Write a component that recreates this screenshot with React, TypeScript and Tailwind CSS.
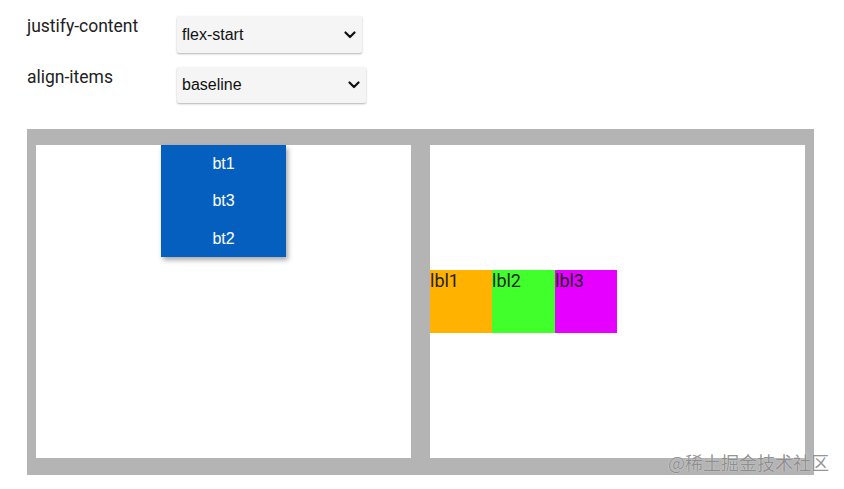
import React from 'react';

const Chevron = () => (
  <svg width="12" height="8" viewBox="0 0 12 8" className="pointer-events-none absolute right-[6px] top-1/2 -translate-y-1/2">
    <path d="M1.5 1.5 L6 6 L10.5 1.5" fill="none" stroke="#111" strokeWidth="2.2" strokeLinecap="round" strokeLinejoin="round" />
  </svg>
);

const Field: React.FC<{ label: string; value: string; options: string[]; width: string }> = ({ label, value, options, width }) => (
  <div className="flex items-start">
    <div className="w-[150px] text-[17.5px] leading-[21px] text-[#222] font-['Roboto',sans-serif]">{label}</div>
    <div className={`relative ${width}`}>
      <select
        defaultValue={value}
        className="h-full w-full appearance-none rounded-[2px] bg-[#f5f5f5] pl-[5px] text-[16px] text-[#111] shadow-[0_1px_2px_rgba(0,0,0,0.3)] outline-none font-['Liberation_Sans',Arial,sans-serif]"
      >
        {options.map((o) => (
          <option key={o}>{o}</option>
        ))}
      </select>
      <Chevron />
    </div>
  </div>
);

const buttons = ['bt1', 'bt3', 'bt2'];
const labels = [
  { text: 'lbl1', cls: 'w-[62px] bg-[#ffb200]' },
  { text: 'lbl2', cls: 'w-[63px] bg-[#40ff2a]' },
  { text: 'lbl3', cls: 'w-[62px] bg-[#e600ff]' },
];

export default function App() {
  return (
    <div className="relative h-[489px] w-[844px] overflow-hidden bg-white">
      <div className="flex flex-col gap-[14px] pl-[27px] pt-[16px]">
        <Field label="justify-content" value="flex-start" width="w-[185px] h-[37px]" options={['flex-start', 'flex-end', 'center', 'space-between', 'space-around']} />
        <Field label="align-items" value="baseline" width="w-[189px] h-[36px]" options={['flex-start', 'flex-end', 'center', 'baseline', 'stretch']} />
      </div>

      <div className="ml-[27px] mt-[26px] flex h-[346px] w-[787px] gap-[19px] bg-[#b4b4b4] pb-[17px] pl-[9px] pr-[9px] pt-[16px]">
        <div className="flex h-full w-[375px] flex-col bg-white">
          <div className="ml-[125px] flex w-[125px] flex-col shadow-[2px_3px_5px_rgba(0,0,0,0.35)]">
            {buttons.map((b, i) => (
              <div
                key={b}
                className={`flex ${i === 1 ? 'h-[38px]' : 'h-[37px]'} items-center justify-center bg-[#055fbf] text-[16px] text-white font-['Liberation_Sans',Arial,sans-serif]`}
              >
                {b}
              </div>
            ))}
          </div>
        </div>
        <div className="flex h-full w-[375px] items-center bg-white">
          {labels.map((l) => (
            <div key={l.text} className={`h-[63px] ${l.cls} text-[18px] leading-[22px] text-[#222] font-['Roboto',sans-serif]`}>
              {l.text}
            </div>
          ))}
        </div>
      </div>

      <div className="absolute left-[668px] top-[450px] text-[18px] leading-[24px] text-[#8a8a8a] opacity-90 [text-shadow:0_0_1px_#fff] font-['Noto_Sans_CJK_SC',sans-serif]">
        @稀土掘金技术社区
      </div>
    </div>
  );
}
